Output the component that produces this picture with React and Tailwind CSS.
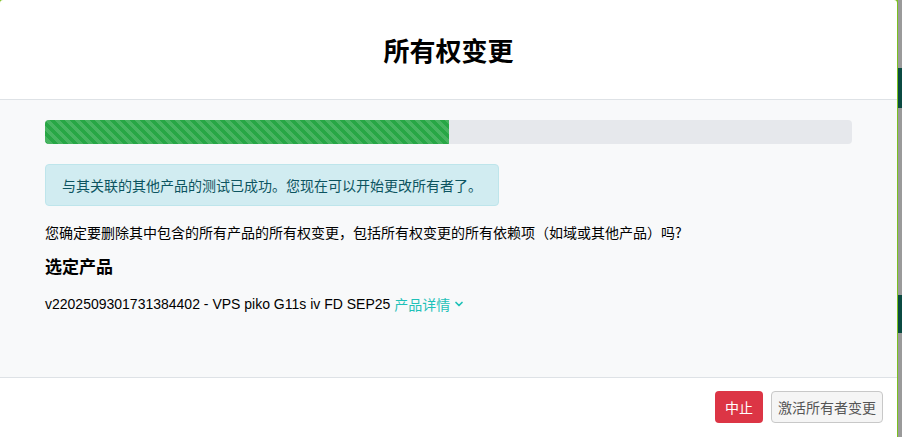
import React from 'react';
import { ChevronDown } from 'lucide-react';

const cjk = '"Noto Sans CJK SC", "Liberation Sans", sans-serif';

export default function App() {
  return (
    <div className="flex h-[437px] w-[902px] overflow-hidden bg-[#7cc11f]" style={{ fontFamily: '"Liberation Sans", "Noto Sans CJK SC", sans-serif' }}>
      <div className="flex w-[897px] flex-col overflow-hidden rounded-t-[3px] bg-white text-[#212529]">
        {/* header */}
        <div className="flex h-[100px] shrink-0 items-center justify-center border-b border-[#dee2e6]">
          <h1 className="text-[26px] font-bold text-black" style={{ fontFamily: cjk }}>所有权变更</h1>
        </div>

        {/* body */}
        <div className="flex h-[277px] shrink-0 flex-col bg-[#f8f9fa] px-[45px] pt-[20px]">
          <div className="h-[24px] w-full overflow-hidden rounded-[4px] bg-[#e6e8ec]">
            <div className="h-full w-1/2 bg-[#28a745] bg-[length:10px_10px] bg-[linear-gradient(45deg,rgba(255,255,255,.15)_25%,transparent_25%,transparent_50%,rgba(255,255,255,.15)_50%,rgba(255,255,255,.15)_75%,transparent_75%,transparent)]" />
          </div>

          <div className="mt-[20px] w-fit rounded-[4px] border border-[#bee5eb] bg-[#d1ecf1] px-[16px] py-[10px] text-[14px] leading-[20px] text-[#0c5460]" style={{ fontFamily: cjk }}>
            与其关联的其他产品的测试已成功。您现在可以开始更改所有者了。
          </div>

          <p className="mt-[16px] text-[14px] leading-[20px] text-black" style={{ fontFamily: cjk }}>
            您确定要删除其中包含的所有产品的所有权变更，包括所有权变更的所有依赖项（如域或其他产品）吗?
          </p>

          <h2 className="mt-[12px] text-[17px] font-bold leading-[24px] text-black" style={{ fontFamily: cjk }}>选定产品</h2>

          <div className="mt-[16px] flex items-center text-[14px] leading-[20px] text-black">
            <span>v2202509301731384402 - VPS piko G11s iv FD SEP25&nbsp;</span>
            <span className="flex items-center text-[#1fc1b8]" style={{ fontFamily: cjk }}>
              产品详情
              <ChevronDown size={12} strokeWidth={3.5} className="ml-[3px]" />
            </span>
          </div>
        </div>

        {/* footer */}
        <div className="flex flex-1 items-start justify-end gap-[8px] border-t border-[#dee2e6] bg-white pr-[14px] pt-[13px]" style={{ fontFamily: cjk }}>
          <button className="h-[32px] w-[48px] rounded-[4px] bg-[#dc3545] text-[14px] text-white">中止</button>
          <button className="h-[32px] w-[112px] rounded-[4px] border border-[#c8c8c8] bg-[#f5f5f5] text-[14px] text-[#555]">激活所有者变更</button>
        </div>
      </div>

      {/* background page peeking at the right edge */}
      <div className="ml-[1px] flex w-[4px] flex-col bg-[#9a9a9a]">
        <div className="h-[68px]" />
        <div className="h-[40px] bg-[#0b4a42]" />
        <div className="h-[187px]" />
        <div className="h-[38px] bg-[#0b4a42]" />
      </div>
    </div>
  );
}
